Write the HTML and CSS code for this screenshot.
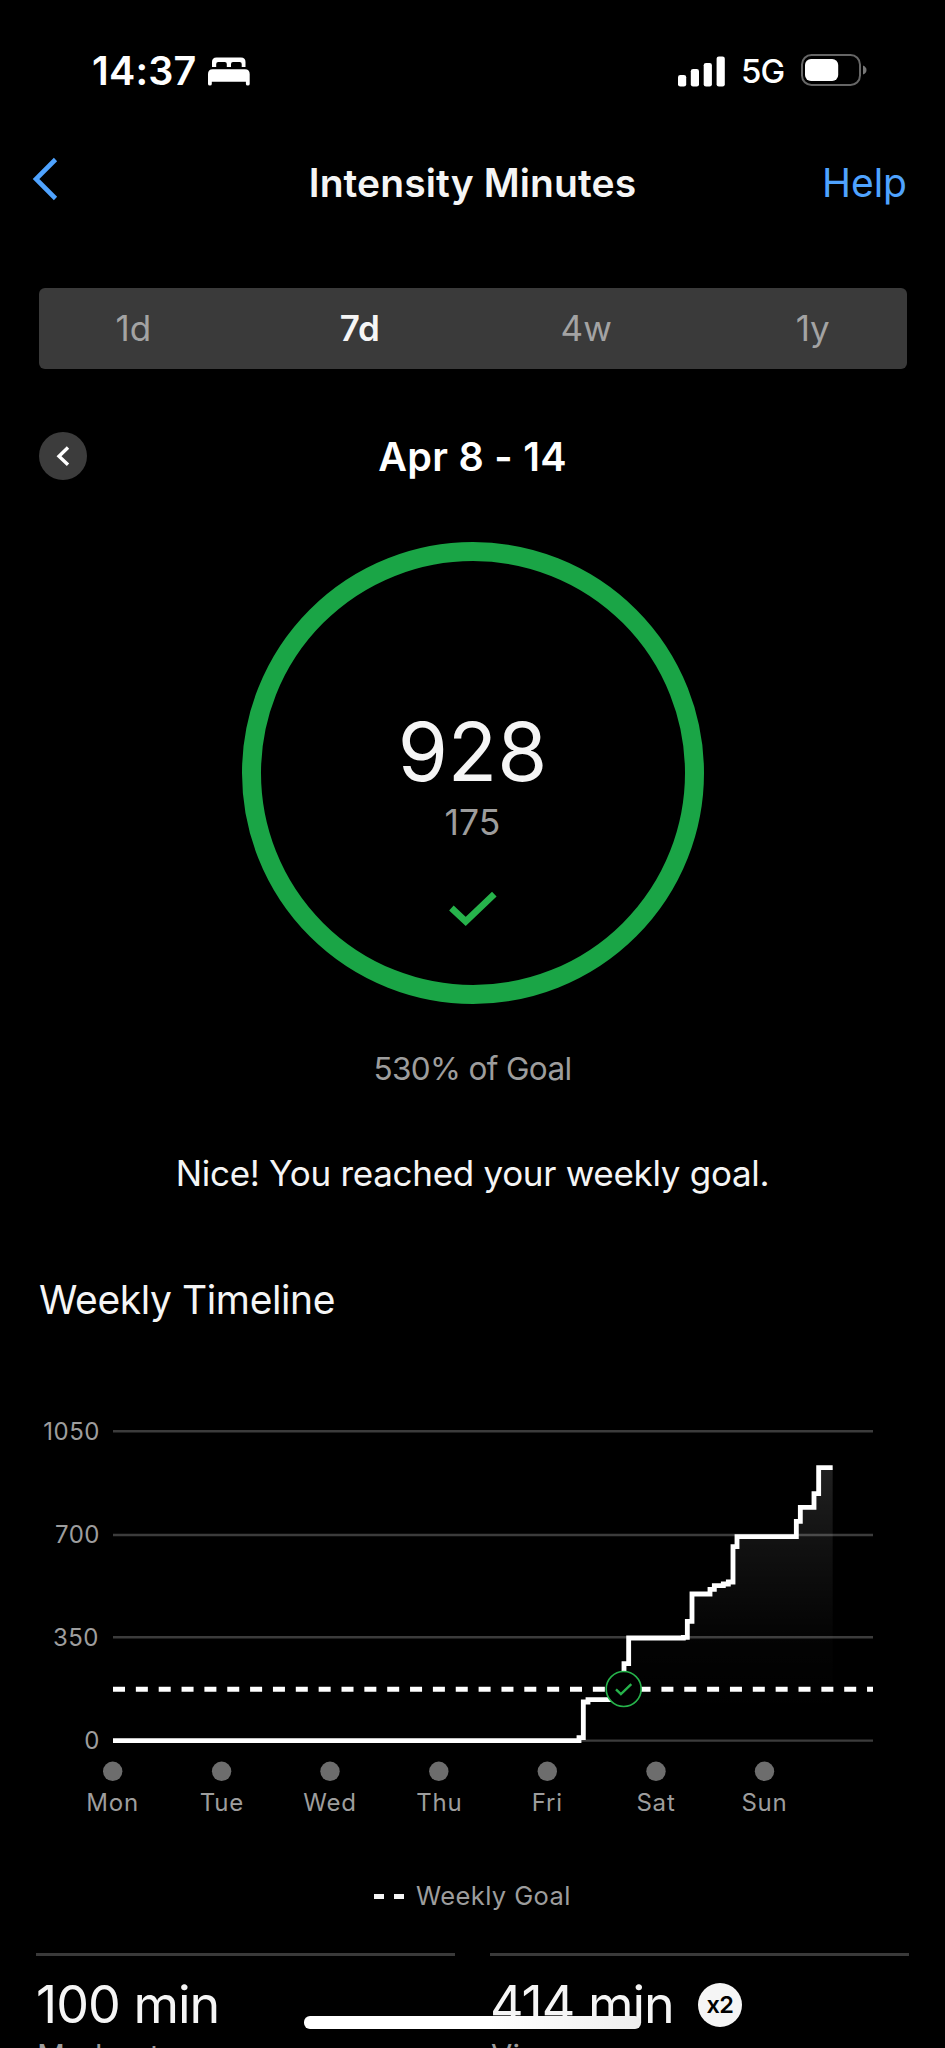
FILE: index.html
```
<!DOCTYPE html>
<html lang="en">
<head>
<meta charset="utf-8">
<title>Intensity Minutes</title>
<link rel="stylesheet" href="styles.css">
</head>
<body>
<div class="screen">
  <header class="status">
    <div class="status-left">
      <span class="time">14:37</span>
      <svg class="bed" width="42" height="29" viewBox="0 0 42 29" fill="#fff"><path d="M4 10V5Q4 .5 8.5 .5H33Q37.500 .5 37.500 5V10H33.700V7Q33.700 5 31.700 5H25Q23 5 23 7V10H18.800V7Q18.800 5 16.800 5H10.200Q8.200 5 8.200 7V10Z"/><path d="M0 17Q0 12.300 4.700 12.300H37Q41.700 12.300 41.700 17V27Q41.700 28.500 39.800 28.500T37.900 27V24.700H3.800V27Q3.800 28.500 1.900 28.500T0 27Z"/></svg>
    </div>
    <div class="status-right">
      <svg width="48" height="31" viewBox="0 0 48 31" fill="#fff"><rect x="0" y="19" width="8.200" height="11.500" rx="2.300"/><rect x="12.800" y="13" width="8.200" height="17.500" rx="2.300"/><rect x="25.700" y="7" width="8.200" height="23.500" rx="2.300"/><rect x="38.600" y=".5" width="8.200" height="30" rx="2.300"/></svg>
      <span class="network">5G</span>
      <svg class="battery" width="68" height="34" viewBox="0 0 68 34"><rect x="2" y="2" width="58" height="30" rx="9.500" fill="none" stroke="#666" stroke-width="2"/><rect x="5" y="6" width="33.200" height="22" rx="6" fill="#fff"/><path d="M63 12.500Q66.500 14 66.500 17T63 21.500Z" fill="#777"/></svg>
    </div>
  </header>

  <nav class="nav">
    <svg class="back" width="28" height="44" viewBox="0 0 28 44"><path d="M23.500 2.500L4 22L23.500 41.500" fill="none" stroke="#4fa3ff" stroke-width="4.600"/></svg>
    <h1 class="title">Intensity Minutes</h1>
    <a class="help">Help</a>
  </nav>

  <div class="tabs">
    <div class="tab-row">
      <span class="tab">1d</span><span class="tab active">7d</span><span class="tab">4w</span><span class="tab">1y</span>
    </div>
  </div>

  <div class="period">
    <span class="prev"><svg width="48" height="48" viewBox="0 0 48 48"><path d="M29 15.500L20 24.200L29 32.800" fill="none" stroke="#fff" stroke-width="3.400"/></svg></span>
    <h2 class="range">Apr 8 - 14</h2>
  </div>

  <section class="ring">
    <div class="total">928</div>
    <div class="goal">175</div>
    <svg class="check" width="50" height="38" viewBox="0 0 50 38"><path d="M3.400 18L17.700 31.500L46.300 4.200" fill="none" stroke="#26b34b" stroke-width="6.600"/></svg>
  </section>
  <p class="percent">530% of Goal</p>
  <p class="message">Nice! You reached your weekly goal.</p>

  <h3 class="section-title">Weekly Timeline</h3>
  <svg class="chart" width="945" height="440" viewBox="0 1390 945 440">
    <defs>
      <linearGradient id="area" x1="0" y1="0" x2="0" y2="1"><stop offset="0" stop-color="#fff" stop-opacity=".13"/><stop offset=".3" stop-color="#fff" stop-opacity=".065"/><stop offset=".62" stop-color="#fff" stop-opacity=".015"/><stop offset=".9" stop-color="#fff" stop-opacity="0"/></linearGradient>
    </defs>
    <path d="M113 1431.300H873M113 1535H873M113 1637.300H873M113 1740.600H873" stroke="#3c3c3c" stroke-width="2.400"/>
    <g class="y-labels">
      <text x="100" y="1440">1050</text><text x="100" y="1543">700</text><text x="99" y="1645.800">350</text><text x="100" y="1748.800">0</text>
    </g>
    <g transform="translate(540 1410) scale(.33333)">
      <path d="M117 992V983H130V876H144V869H252V761H266V684H430V682H442V634H456V552H510V538H523V527H550V522H565V516H579V410H591V380H769V334H781V292H822V251H836V173H878V992Z" fill="url(#area)"/>
      <path d="M-1281 992H117V983H130V876H144V869H252V761H266V684H430V682H442V634H456V552H510V538H523V527H550V522H565V516H579V410H591V380H769V334H781V292H822V251H836V173H878" fill="none" stroke="#fff" stroke-width="14.500"/>
    </g>
    <path d="M113 1689.300H873" stroke="#fff" stroke-width="5" stroke-dasharray="12 10.850"/>
    <circle cx="623.700" cy="1689" r="17.500" fill="#000" stroke="#26b34b" stroke-width="1.600"/>
    <path d="M616 1689.400L620.900 1694L631.300 1684.200" fill="none" stroke="#26b34b" stroke-width="2.400"/>
    <g fill="#6d6d6d"><circle cx="112.700" cy="1771.300" r="9.700"/><circle cx="221.600" cy="1771.300" r="9.700"/><circle cx="330" cy="1771.300" r="9.700"/><circle cx="438.800" cy="1771.300" r="9.700"/><circle cx="547.300" cy="1771.300" r="9.700"/><circle cx="656" cy="1771.300" r="9.700"/><circle cx="764.500" cy="1771.300" r="9.700"/></g>
    <g class="x-labels">
      <text x="112.700" y="1811">Mon</text><text x="222" y="1811">Tue</text><text x="330" y="1811">Wed</text><text x="439.300" y="1811">Thu</text><text x="547.300" y="1811">Fri</text><text x="656" y="1811">Sat</text><text x="764.500" y="1811">Sun</text>
    </g>
  </svg>

  <div class="legend">
    <span class="dash"></span><span class="dash"></span><span class="legend-text">Weekly Goal</span>
  </div>

  <div class="stats">
    <div class="stat">
      <div class="value"><span class="minutes">100 min</span></div>
      <div class="label">Moderate</div>
    </div>
    <div class="stat">
      <div class="value"><span class="minutes">414 min</span><span class="multiplier">x2</span></div>
      <div class="label">Vigorous</div>
    </div>
  </div>
  <div class="home-bar"></div>
</div>
</body>
</html>
```

FILE: styles.css
```
* { box-sizing: border-box; }
body { margin: 0; background: #000; color: #f5f5f5; font-family: Inter, "Liberation Sans", sans-serif; }
h1, h2, h3, p { margin: 0; font-weight: 400; }
svg { display: block; flex: none; }
.screen { position: relative; width: 945px; height: 2048px; overflow: hidden; display: flex; flex-direction: column; background: #000; }
.screen > * { flex: none; }

.status { height: 142px; display: flex; justify-content: space-between; align-items: center; padding: 0 77px 0 92px; color: #fff; }
.status-left, .status-right { display: flex; align-items: center; }
.time { font-size: 39.5px; font-weight: 600; width: 116px; letter-spacing: 0.2px; white-space: nowrap; }
.network { font-size: 33px; font-weight: 500; margin-left: 15px; width: 59px; letter-spacing: -1px; white-space: nowrap; }
.battery { margin-top: -2px; }

.nav { height: 82px; display: grid; grid-template-columns: 150px 1fr 150px; align-items: center; padding: 0 38px 2px; }
.back { margin: -6px 0 0 -6px; }
.title { font-size: 39px; font-weight: 600; text-align: center; letter-spacing: 0.1px; white-space: nowrap; }
.help { font-size: 39px; color: #4fa3ff; text-align: right; }

.tabs { margin: 64px 38px 0 39px; height: 81px; background: #3a3a3a; border-radius: 6px; }
.tab-row { display: grid; grid-template-columns: repeat(4, 1fr); margin: 0 -19px; line-height: 81px; text-align: center; font-size: 35px; color: #a3a3a3; }
.tab.active { color: #f5f5f5; font-weight: 600; }

.period { height: 48px; margin-top: 63px; display: grid; grid-template-columns: 48px 1fr 48px; padding: 0 39px; }
.prev { width: 48px; height: 48px; border-radius: 50%; background: #3c3c3c; }
.range { line-height: 50px; font-size: 39.5px; font-weight: 600; text-align: center; letter-spacing: 0.3px; color: #fff; }

.ring { width: 462px; height: 462px; margin: 62px auto 0; border: 19.500px solid #1aa546; border-radius: 50%; display: flex; flex-direction: column; align-items: center; }
.total { margin-top: 141px; height: 99px; line-height: 100px; font-size: 81px; }
.goal { height: 44px; line-height: 44px; font-size: 35.500px; color: #9d9d9d; }
.check { margin-top: 45px; }
.percent { margin-top: 45px; line-height: 40px; text-align: center; font-size: 31.500px; letter-spacing: -0.65px; color: #9d9d9d; }
.message { margin-top: 62px; line-height: 44px; text-align: center; font-size: 35px; letter-spacing: -0.3px; }
.section-title { margin-top: 81px; padding-left: 39px; line-height: 48px; font-size: 39px; letter-spacing: -0.4px; }

.chart { margin-top: 66px; fill: #9d9d9d; font-size: 24px; }
.y-labels { text-anchor: end; letter-spacing: 0.5px; }
.x-labels { text-anchor: middle; letter-spacing: 0.8px; }

.legend { margin-top: 46px; height: 40px; line-height: 40px; display: flex; align-items: center; padding-left: 374px; color: #9d9d9d; }
.dash { width: 10px; height: 5px; margin-right: 9.500px; background: #f5f5f5; }
.legend-text { margin-left: 3px; font-size: 25.500px; letter-spacing: 0.4px; }

.stats { margin-top: 37px; display: grid; grid-template-columns: 419px 419px; gap: 35px; padding-left: 36px; height: 95px; overflow: hidden; }
.stat { border-top: 3px solid #3a3a3a; }
.value { height: 97px; line-height: 97px; display: flex; align-items: center; }
.minutes { font-size: 52px; letter-spacing: -1px; white-space: nowrap; }
.multiplier { width: 44px; height: 44px; line-height: 44px; margin-left: 24px; border-radius: 50%; background: #f5f5f5; color: #000; text-align: center; font-size: 23.500px; font-weight: 600; letter-spacing: -0.8px; }
.label { line-height: 40px; margin-top: -17px; margin-left: 1px; font-size: 31px; color: #9d9d9d; }

/* System home indicator floats over the scrolling content */
.home-bar { position: absolute; left: 304px; top: 2016px; width: 337px; height: 13px; border-radius: 6px; background: linear-gradient(90deg, #fff 55%, #eee); }
```
